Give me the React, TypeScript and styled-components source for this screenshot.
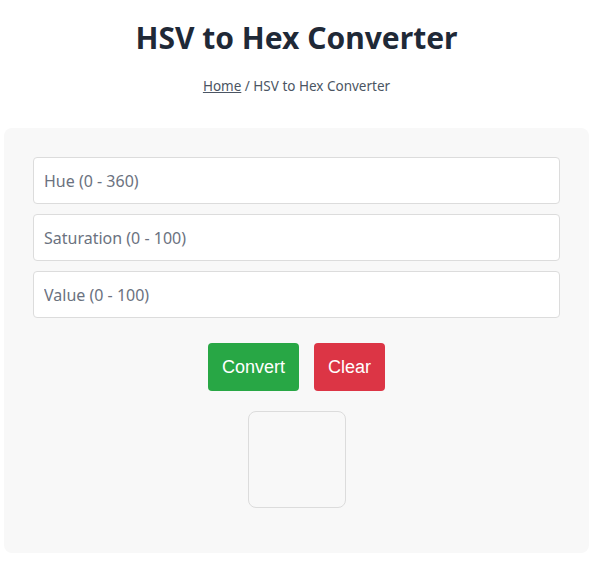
import React, { useState } from "react";
import styled, { createGlobalStyle } from "styled-components";

const GlobalStyle = createGlobalStyle`
  body {
    margin: 0;
    background: #ffffff;
    font-family: "Noto Sans", "Open Sans", sans-serif;
  }
`;

const Page = styled.div`
  display: flex;
  flex-direction: column;
  align-items: center;
  padding: 0 11px 0 4px;
`;

const Title = styled.h1`
  margin: 18px 0 0;
  font-size: 30px;
  line-height: 40px;
  font-weight: 700;
  color: #1f2937;
  text-align: center;
`;

const Breadcrumb = styled.div`
  margin-top: 18px;
  font-size: 13.5px;
  line-height: 20px;
  color: #4b5563;

  & > a {
    color: #4b5563;
    text-decoration: underline;
  }
`;

const Card = styled.div`
  box-sizing: border-box;
  width: 100%;
  margin-top: 32px;
  padding: 29px 29px 45px;
  background-color: #f8f8f8;
  border-radius: 8px;
  display: flex;
  flex-direction: column;
  align-items: center;
`;

const Field = styled.input`
  box-sizing: border-box;
  width: 100%;
  height: 47px;
  margin-bottom: 10px;
  padding: 0 10px;
  border: 1px solid #dcdcdc;
  border-radius: 4px;
  background: #ffffff;
  font-family: "Noto Sans", "Open Sans", sans-serif;
  font-size: 16px;
  color: #1f2937;

  &::placeholder {
    color: #6b7280;
  }
`;

const ButtonRow = styled.div`
  display: flex;
  gap: 15px;
  margin-top: 15px;
`;

const Button = styled.button<{ $tone: "green" | "red" }>`
  height: 48px;
  padding: 0 14px;
  border: none;
  border-radius: 4px;
  font-family: "Liberation Sans", Arial, sans-serif;
  font-size: 18px;
  color: #ffffff;
  cursor: pointer;
  background-color: ${(p) => (p.$tone === "green" ? "#28a745" : "#dc3545")};
`;

const Preview = styled.div<{ $color: string }>`
  width: 98px;
  height: 97px;
  margin-top: 20px;
  box-sizing: border-box;
  border: 1px solid #dcdcdc;
  border-radius: 8px;
  background-color: ${(p) => p.$color};
`;

function hsvToHex(h: number, s: number, v: number): string {
  s /= 100;
  v /= 100;
  const f = (n: number) => {
    const k = (n + h / 60) % 6;
    return v - v * s * Math.max(Math.min(k, 4 - k, 1), 0);
  };
  const toHex = (x: number) =>
    Math.round(x * 255)
      .toString(16)
      .padStart(2, "0");
  return `#${toHex(f(5))}${toHex(f(3))}${toHex(f(1))}`;
}

const App: React.FC = () => {
  const [hue, setHue] = useState("");
  const [sat, setSat] = useState("");
  const [val, setVal] = useState("");
  const [color, setColor] = useState("transparent");

  const convert = () => {
    const h = parseFloat(hue);
    const s = parseFloat(sat);
    const v = parseFloat(val);
    if (isNaN(h) || isNaN(s) || isNaN(v)) return;
    setColor(hsvToHex(h, s, v));
  };

  const clear = () => {
    setHue("");
    setSat("");
    setVal("");
    setColor("transparent");
  };

  return (
    <>
      <GlobalStyle />
      <Page>
        <Title>HSV to Hex Converter</Title>
        <Breadcrumb>
          <a href="#">Home</a> / HSV to Hex Converter
        </Breadcrumb>
        <Card>
          <Field
            placeholder="Hue (0 - 360)"
            value={hue}
            onChange={(e) => setHue(e.target.value)}
          />
          <Field
            placeholder="Saturation (0 - 100)"
            value={sat}
            onChange={(e) => setSat(e.target.value)}
          />
          <Field
            placeholder="Value (0 - 100)"
            value={val}
            onChange={(e) => setVal(e.target.value)}
          />
          <ButtonRow>
            <Button $tone="green" onClick={convert}>
              Convert
            </Button>
            <Button $tone="red" onClick={clear}>
              Clear
            </Button>
          </ButtonRow>
          <Preview $color={color} />
        </Card>
      </Page>
    </>
  );
};

export default App;
